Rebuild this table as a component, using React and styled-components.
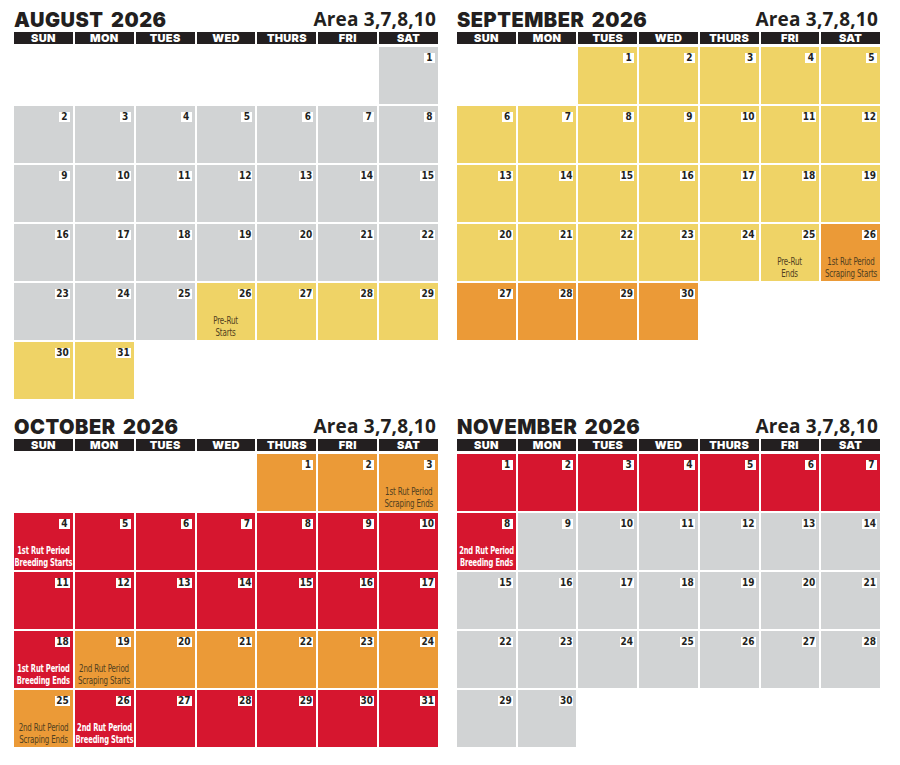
import React from "react";
import styled, { createGlobalStyle } from "styled-components";

const GlobalStyle = createGlobalStyle`
  html, body { margin: 0; padding: 0; background: #ffffff; }
  body { font-family: "Liberation Sans", Arial, sans-serif; }
`;

const TONES = {
  gray: "#d1d3d4",
  yellow: "#efd366",
  orange: "#eb9a37",
  red: "#d6162f",
};

const Page = styled.div`
  display: grid;
  grid-template-columns: 424px 423px;
  column-gap: 19px;
  row-gap: 14px;
  align-items: start;
  padding: 6px 0 0 14px;
  width: 900px;
  box-sizing: border-box;
`;

const Month = styled.section`
  display: flex;
  flex-direction: column;
`;

const TitleRow = styled.header`
  display: flex;
  justify-content: space-between;
  align-items: flex-end;
  height: 26px;
`;

const MonthTitle = styled.h2`
  margin: 0;
  font-family: "Inter", "DejaVu Sans", sans-serif;
  font-weight: 900;
  font-size: 20px;
  line-height: normal;
  letter-spacing: 0.5px;
  word-spacing: 3px;
  color: #231f20;
`;

const AreaLabel = styled.div`
  font-family: "Open Sans", "Liberation Sans", sans-serif;
  font-weight: 700;
  font-size: 19px;
  line-height: normal;
  letter-spacing: 0.2px;
  color: #231f20;
  margin-right: 2px;
`;

const Grid = styled.div`
  display: grid;
  grid-template-columns: repeat(7, minmax(0, 1fr));
  column-gap: 2px;
`;

const DayHeader = styled(Grid)`
  margin-bottom: 3px;
`;

const DayName = styled.div`
  background: #231f20;
  color: #ffffff;
  height: 12px;
  font-family: "Inter", "DejaVu Sans", sans-serif;
  font-weight: 900;
  font-size: 11px;
  line-height: 12px;
  text-align: center;
  letter-spacing: 0.3px;
`;

const Weeks = styled(Grid)`
  grid-auto-rows: 57px;
  row-gap: 2px;
`;

const Cell = styled.div`
  background: ${(p) => TONES[p.$tone]};
  display: flex;
  flex-direction: column;
  padding: 6px 3px 1px 0;
  box-sizing: border-box;
  min-width: 0;
`;

const Blank = styled.div``;

const Badge = styled.span`
  align-self: flex-end;
  background: #ffffff;
  color: #231f20;
  min-width: 11px;
  height: 10px;
  padding: 0 1px;
  box-sizing: border-box;
  font-family: "Liberation Sans Narrow", "DejaVu Sans Condensed", "Liberation Sans", sans-serif;
  font-weight: 700;
  font-size: 10px;
  line-height: 10px;
  text-align: center;
`;

const Note = styled.div`
  margin-top: auto;
  margin-left: 3px;
  align-self: center;
  text-align: center;
  font-family: "DejaVu Sans Condensed", "Liberation Sans", sans-serif;
  font-size: 10px;
  line-height: 12px;
  letter-spacing: -0.2px;
  white-space: nowrap;
  transform: scaleX(${(p) => (p.$light ? 0.75 : 0.79)});
  color: ${(p) => (p.$light ? "#ffffff" : "#4f4020")};
  font-weight: ${(p) => (p.$light ? 700 : 400)};
`;

const DAYS = ["SUN", "MON", "TUES", "WED", "THURS", "FRI", "SAT"];

const months = [
  {
    name: "AUGUST 2026",
    start: 6,
    days: 31,
    tone: (d) => (d >= 26 ? "yellow" : "gray"),
    notes: { 26: ["Pre-Rut", "Starts"] },
  },
  {
    name: "SEPTEMBER 2026",
    start: 2,
    days: 30,
    tone: (d) => (d >= 26 ? "orange" : "yellow"),
    notes: {
      25: ["Pre-Rut", "Ends"],
      26: ["1st Rut Period", "Scraping Starts"],
    },
  },
  {
    name: "OCTOBER 2026",
    start: 4,
    days: 31,
    tone: (d) => (d <= 3 ? "orange" : d <= 18 ? "red" : d <= 25 ? "orange" : "red"),
    notes: {
      3: ["1st Rut Period", "Scraping Ends"],
      4: ["1st Rut Period", "Breeding Starts"],
      18: ["1st Rut Period", "Breeding Ends"],
      19: ["2nd Rut Period", "Scraping Starts"],
      25: ["2nd Rut Period", "Scraping Ends"],
      26: ["2nd Rut Period", "Breeding Starts"],
    },
  },
  {
    name: "NOVEMBER 2026",
    start: 0,
    days: 30,
    tone: (d) => (d <= 8 ? "red" : "gray"),
    notes: { 8: ["2nd Rut Period", "Breeding Ends"] },
  },
];

function MonthCalendar({ month }) {
  const cells = [];
  for (let i = 0; i < month.start; i++) cells.push(<Blank key={`b${i}`} />);
  for (let d = 1; d <= month.days; d++) {
    const tone = month.tone(d);
    const note = month.notes[d];
    cells.push(
      <Cell key={d} $tone={tone}>
        <Badge>{d}</Badge>
        {note && (
          <Note $light={tone === "red"}>
            {note[0]}
            <br />
            {note[1]}
          </Note>
        )}
      </Cell>
    );
  }
  return (
    <Month>
      <TitleRow>
        <MonthTitle>{month.name}</MonthTitle>
        <AreaLabel>Area 3,7,8,10</AreaLabel>
      </TitleRow>
      <DayHeader>
        {DAYS.map((d) => (
          <DayName key={d}>{d}</DayName>
        ))}
      </DayHeader>
      <Weeks>{cells}</Weeks>
    </Month>
  );
}

export default function App() {
  return (
    <>
      <GlobalStyle />
      <Page>
        {months.map((m) => (
          <MonthCalendar key={m.name} month={m} />
        ))}
      </Page>
    </>
  );
}
